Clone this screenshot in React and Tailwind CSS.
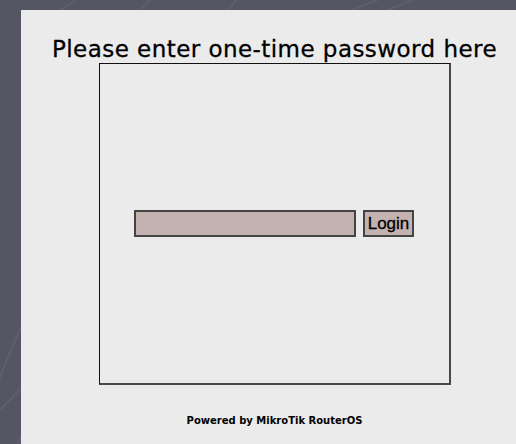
import React, { useState } from 'react';

// Faint circular swooshes in the dark backdrop
const Backdrop = () => (
    <svg className="absolute inset-0" width="516" height="444" viewBox="0 0 516 444">
        <g fill="none" stroke="#ffffff" strokeOpacity="0.06" strokeWidth="2">
            <circle cx="620" cy="520" r="560" />
            <circle cx="640" cy="560" r="470" />
            <circle cx="600" cy="600" r="640" />
            <circle cx="560" cy="700" r="600" />
            <path d="M0 410 Q 40 370 70 330" />
            <path d="M60 10 Q 70 4 76 0" />
            <path d="M140 10 Q 146 4 150 0" />
            <path d="M228 10 Q 232 5 236 0" />
        </g>
    </svg>
);

const App = () => {
    const [password, setPassword] = useState('');

    const handleSubmit = (e) => {
        e.preventDefault();
    };

    return (
        <div className="relative w-[516px] h-[444px] overflow-hidden bg-[#545664]">
            <Backdrop />
            <div className="relative h-full pt-[10px] pl-[21px]">
                <div
                    className="h-full bg-[#ebebeb] pl-[12px] flex flex-col items-center"
                    style={{ fontFamily: '"DejaVu Sans", Verdana, sans-serif' }}
                >
                    <h1 className="mt-[26px] text-[23px] leading-[27px] tracking-[0.45px] text-black whitespace-nowrap [-webkit-text-stroke:0.3px_black]">
                        Please enter one-time password here
                    </h1>

                    <form
                        onSubmit={handleSubmit}
                        className="w-[352px] h-[322px] border-t border-l border-r-2 border-b-2 border-t-[#111] border-l-[#111] border-r-[#484848] border-b-[#484848] flex items-center justify-center gap-[7px]"
                    >
                        <input
                            type="password"
                            value={password}
                            onChange={(e) => setPassword(e.target.value)}
                            className="w-[222px] h-[27px] bg-[#c4b2b0] border-2 border-[#444] outline-none px-1"
                        />
                        <button
                            type="submit"
                            className="w-[51px] h-[27px] bg-[#c4b2b0] border-2 border-[#444] text-[17px] leading-[20px] text-black flex items-center justify-center [-webkit-text-stroke:0.3px_black]"
                            style={{ fontFamily: '"Liberation Sans", Arial, sans-serif' }}
                        >
                            Login
                        </button>
                    </form>

                    <div className="mt-[28px] text-[10px] font-bold text-black whitespace-nowrap">
                        Powered by MikroTik RouterOS
                    </div>
                </div>
            </div>
        </div>
    );
};

export default App;
